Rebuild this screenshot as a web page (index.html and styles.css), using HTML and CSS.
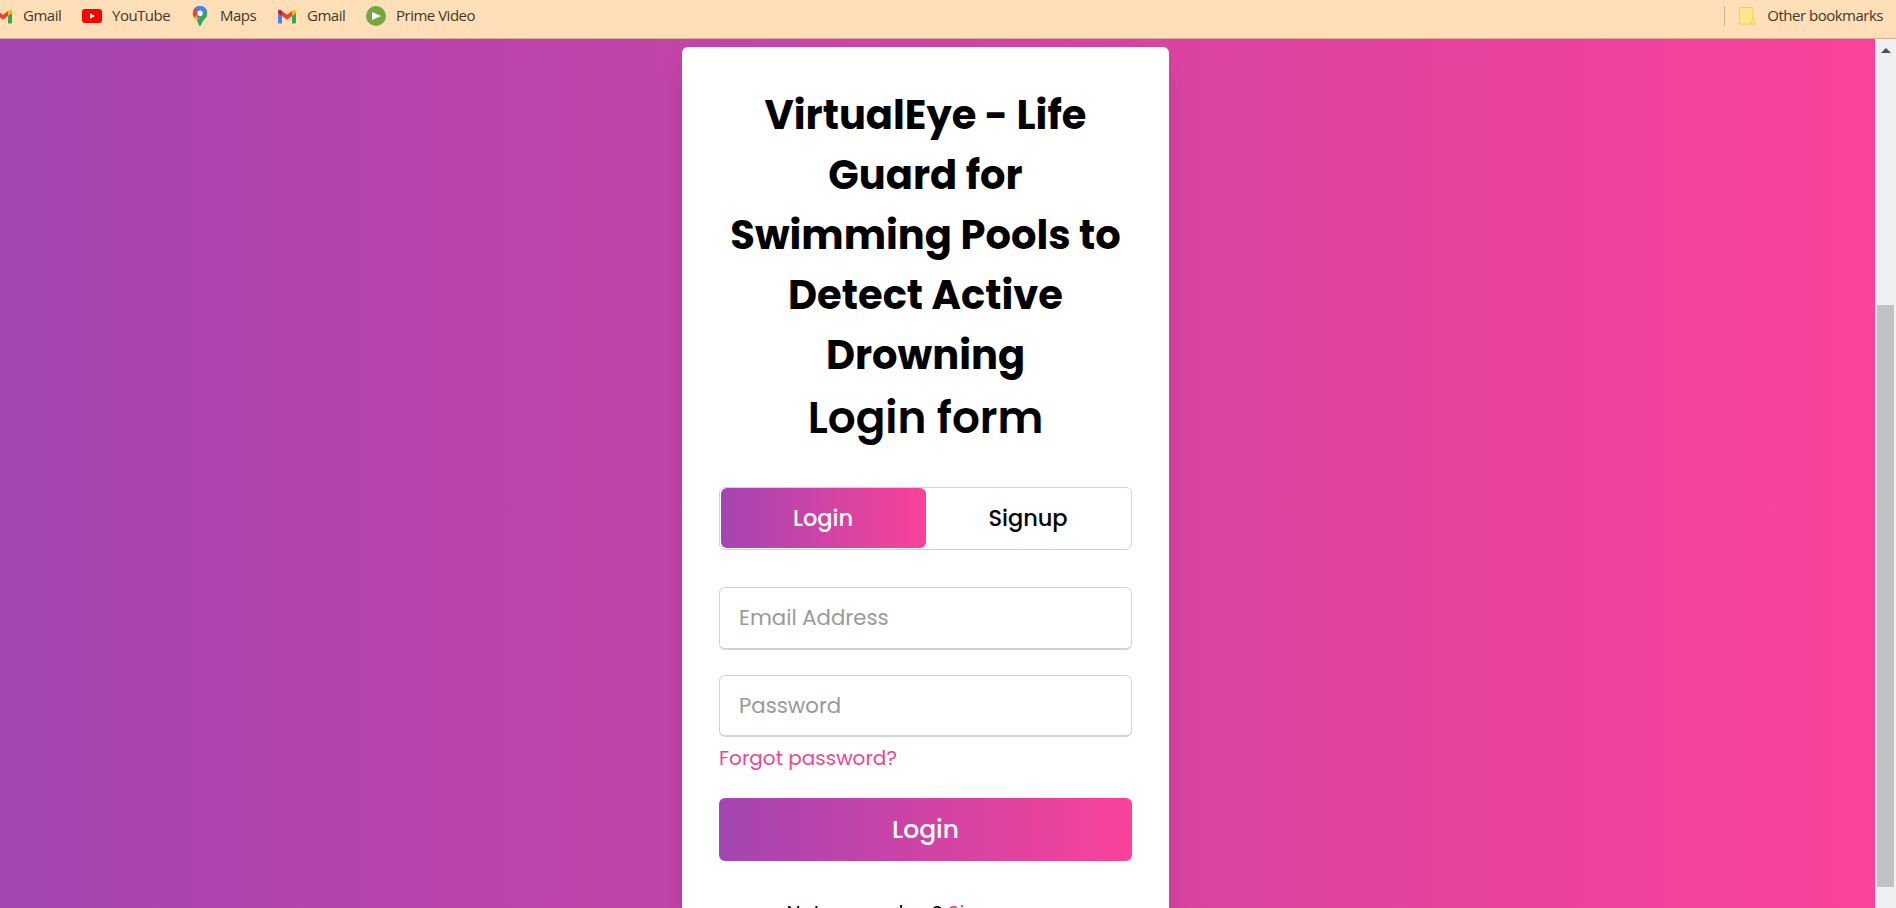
FILE: index.html
```
<!DOCTYPE html>
<html lang="en">
<head>
<meta charset="utf-8">
<title>Login form</title>
<link rel="stylesheet" href="styles.css">
</head>
<body>
<header class="bookmarks">
  <div class="bookmark gmail-first">
    <svg class="icon" viewBox="0 0 20 20"><path fill="#4285f4" d="M1 17V6l4 3v8q0 .5-.5.500H2q-1 0-1-1z"/><path fill="#34a853" d="M15 17.500V9l4-3v10.500q0 1-1 1z"/><path fill="#fbbc04" d="M15 10V5l1.500-1.100Q19 3 19 5.500V7z"/><path fill="#c5221f" d="M1 7V5.500Q1 3 3.500 3.900L5 5v5z"/><path fill="#ea4335" d="M5 10V5l5 3.800L15 5v5l-5 3.800z"/></svg>
    <span class="name">Gmail</span>
  </div>
  <div class="bookmark youtube">
    <svg class="icon" viewBox="0 0 20 20"><rect y="3" width="20" height="14" rx="3" fill="#f00"/><path fill="#fff" d="M8 7.200v5.600l5-2.800z"/></svg>
    <span class="name">YouTube</span>
  </div>
  <div class="bookmark maps">
    <svg class="icon" viewBox="0 0 20 20"><defs><clipPath id="pin"><path d="M10 0a7.200 7.200 0 0 1 7.200 7.200c0 5-4.700 6-6.200 11.800q-1 2-2 0C7.500 13.200 2.800 12.200 2.800 7.200A7.200 7.200 0 0 1 10 0z"/></clipPath></defs><g clip-path="url(#pin)"><path fill="#34a853" d="M0 0h20v20H0z"/><path fill="#fbbc04" d="M0 13 13 0h7L5 17z"/><path fill="#4285f4" d="M4 0h16v2L8 13 5 6z"/><path fill="#34a853" d="m17 3 3 17H8l-1-3z"/><path fill="#4285f4" d="m4 3 5 5 8-8H4z"/><path fill="#ea4335" d="M0 2h4l5 4-6 7-3-4z"/></g><circle cx="10" cy="7.200" r="2.700" fill="#fff"/></svg>
    <span class="name">Maps</span>
  </div>
  <div class="bookmark gmail">
    <svg class="icon" viewBox="0 0 20 20"><path fill="#4285f4" d="M1 17V6l4 3v8q0 .5-.5.500H2q-1 0-1-1z"/><path fill="#34a853" d="M15 17.500V9l4-3v10.500q0 1-1 1z"/><path fill="#fbbc04" d="M15 10V5l1.500-1.100Q19 3 19 5.500V7z"/><path fill="#c5221f" d="M1 7V5.500Q1 3 3.500 3.900L5 5v5z"/><path fill="#ea4335" d="M5 10V5l5 3.800L15 5v5l-5 3.800z"/></svg>
    <span class="name">Gmail</span>
  </div>
  <div class="bookmark prime">
    <svg class="icon" viewBox="0 0 20 20"><circle cx="10" cy="10" r="10" fill="#74a73f"/><path fill="#fff" d="M6 6v8l9-4z"/></svg>
    <span class="name">Prime Video</span>
  </div>
  <div class="bookmark others">
    <svg class="icon" viewBox="0 0 20 20"><path fill="#fde68a" stroke="#eed05e" d="M2.500 1.500h13.500v12l1 1v3.500H2.500z"/><path fill="#fde68a" stroke="#eed05e" d="M14 18v-3.500l3.500-1V18z"/></svg>
    <span class="name">Other bookmarks</span>
  </div>
</header>
<div class="viewport">
  <main class="page">
    <section class="card">
      <h1 class="title">VirtualEye - Life Guard for Swimming Pools to Detect Active Drowning</h1>
      <h2 class="subtitle">Login form</h2>
      <div class="tabs">
        <div class="tab active">Login</div>
        <div class="tab">Signup</div>
      </div>
      <form class="form">
        <input class="field" type="text" placeholder="Email Address">
        <input class="field password" type="password" placeholder="Password">
        <a class="forgot">Forgot password?</a>
        <button class="submit" type="button">Login</button>
        <p class="member">Not a member? <a>Signup now</a></p>
      </form>
    </section>
  </main>
  <aside class="scrollbar">
    <svg class="arrow" viewBox="0 0 10 5"><path fill="#505050" d="M0 5 5 0l5 5z"/></svg>
    <div class="thumb"></div>
  </aside>
</div>
</body>
</html>
```
FILE: styles.css
```
* { box-sizing: border-box; margin: 0; padding: 0; }
body { width: 1896px; height: 908px; overflow: hidden; display: flex; flex-direction: column; font-family: Poppins, Inter, sans-serif; }

.bookmarks { height: 39px; flex: none; display: flex; align-items: center; background: #ffdfb7; border-bottom: 1px solid #d3ad96; padding: 0 13px 6px 0; font: 15px "Open Sans", sans-serif; letter-spacing: -0.5px; color: #463628; }
.bookmark { display: flex; align-items: center; gap: 10px; flex: none; white-space: nowrap; }
.name { padding-bottom: 2px; }
.icon { width: 20px; height: 20px; flex: none; }
.gmail-first { width: 89px; margin-left: -7px; }
.youtube { width: 108px; }
.maps { width: 87px; }
.gmail { width: 89px; }
.others { margin-left: auto; height: 20px; padding-left: 12px; border-left: 1px solid #cfae87; }

.viewport { flex: 1; min-height: 0; display: flex; }
.page { flex: 1; display: flex; justify-content: center; align-items: flex-start; padding: 8px 24px 0 0; background: linear-gradient(to right, #a445b2, #fa4299); overflow: hidden; }
.card { width: 487px; height: 980px; background: #fff; border-radius: 6px; padding: 38px 37px; box-shadow: 0 19px 25px rgba(0, 0, 0, .1); }
.title { font-size: 40px; font-weight: 700; line-height: 60px; text-align: center; }
.subtitle { font-size: 43.75px; font-weight: 600; line-height: 65px; text-align: center; }

.tabs { display: flex; height: 63px; margin-top: 37px; border: 1px solid lightgrey; border-radius: 6px; padding-left: 1px; }
.tab { flex: 1; height: 60px; padding-right: 1px; font-size: 22.5px; font-weight: 500; line-height: 60px; text-align: center; }
.active { color: #fff; background: linear-gradient(to right, #a445b2, #fa4299); border-radius: 6px; }

.form { display: flex; flex-direction: column; margin-top: 37px; }
.field { width: 100%; height: 63px; margin-bottom: 25px; border: 1px solid lightgrey; border-bottom-width: 2px; border-radius: 6px; padding: 0 19px 2px; font: 21.25px Poppins, Inter, sans-serif; outline: none; }
.password { height: 62px; padding-bottom: 1px; }
.field::placeholder { color: #999; }
.forgot { margin-top: -19px; font-size: 20px; line-height: 30px; color: #e8488f; }
.submit { height: 63px; margin-top: 25px; border: 0; border-radius: 6px; background: linear-gradient(to right, #a445b2, #fa4299); color: #fff; font: 500 25px Poppins, Inter, sans-serif; }
.member { margin-top: 37px; font-size: 20px; line-height: 30px; text-align: center; }
.member a { color: #e8488f; }

.scrollbar { width: 21px; flex: none; background: #f0f0f0; display: flex; flex-direction: column; padding: 9px 2px 0; }
.arrow { width: 10px; height: 5px; margin-left: 4px; flex: none; }
.thumb { height: 582px; margin-top: 252px; background: #c1c1c1; flex: none; }
```
